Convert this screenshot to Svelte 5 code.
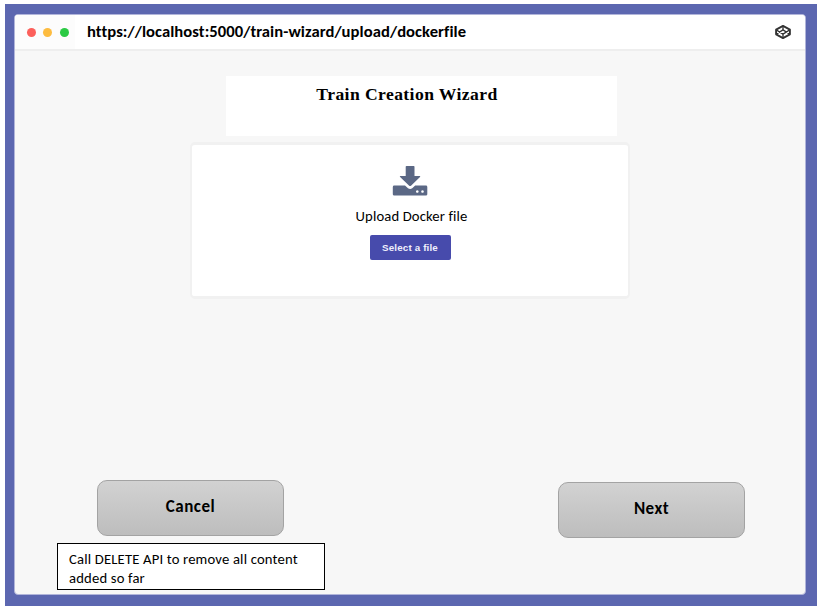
<script>
  const lights = ['#fc605b', '#fdbc40', '#2bca44'];
</script>

<div class="page">
  <div class="frame">
    <div class="window">
      <header>
        <div class="lights">
          {#each lights as color}
            <i style="background: {color}"></i>
          {/each}
        </div>
        <div class="url">https://localhost:5000/train-wizard/upload/dockerfile</div>
        <svg class="logo" viewBox="0 0 18 16" width="18" height="16">
          <g fill="none" stroke="#333" stroke-width="1.9" stroke-linejoin="round">
            <path d="M9 1.9 15.9 5.7V10.3L9 14.1 2.1 10.3V5.7Z" />
            <path d="M2.1 5.7 9 10.1 15.9 5.7M2.1 10.3 9 5.9 15.9 10.3M9 1.9V5.9M9 10.1V14.1" stroke-width="1.35" />
          </g>
        </svg>
      </header>
      <main>
        <h1>Train Creation Wizard</h1>
        <section class="card">
          <svg class="upload" viewBox="0 0 36 32" width="36" height="32">
            <path fill="#5b6885" d="M14.5 1h7.2q.8 0 .8.8V11h5.1q1.3 0 .4 1L19 20.7q-.9.8-1.8 0L8.1 12q-.9-1 .4-1h5.2V1.8q0-.8.8-.8Z" />
            <path fill="#5b6885" fill-rule="evenodd" d="M2.2 20.5H13l3 2.7q2.1 1.6 4.2 0l3-2.7h10.7q1.4 0 1.4 1.4v7.3q0 1.4-1.4 1.4H2.2q-1.4 0-1.4-1.4v-7.3q0-1.4 1.4-1.4ZM25.3 25.2a1.3 1.3 0 1 0 .01 0ZM30.5 25.2a1.3 1.3 0 1 0 .01 0Z" />
          </svg>
          <p>Upload Docker file</p>
          <button class="select">Select a file</button>
        </section>
        <div class="actions">
          <div class="left">
            <button class="big cancel">Cancel</button>
            <div class="note">
              <div>Call DELETE API to remove all content</div>
              <div>added so far</div>
            </div>
          </div>
          <button class="big next">Next</button>
        </div>
      </main>
    </div>
  </div>
</div>

<style>
  :global(body) { margin: 0; background: #fff; }
  * { box-sizing: border-box; }
  .page {
    width: 823px; height: 613px; padding: 4px 6px 7px 5px; background: #fff;
    font-family: Carlito, Lato, sans-serif; color: #000; overflow: hidden;
  }
  .frame { height: 602px; padding: 10px 11px 11px 9px; background: #5c67b0; }
  .window {
    height: 581px; background: #f7f7f7; border: 1px solid #b1b5da; border-radius: 4px;
    display: flex; flex-direction: column; overflow: hidden;
  }
  header {
    height: 36px; flex: none; display: flex; align-items: center; background: #fff;
    border-bottom: 2px solid #eeeeee;
  }
  .lights {
    width: 60px; height: 34px; padding-left: 12px; display: flex; gap: 7.4px;
    align-items: center; background: #fcfcfc;
  }
  i { width: 9px; height: 9px; border-radius: 50%; }
  .url { margin: -2px 0 0 12px; font-size: 16.6px; font-weight: 700; line-height: 20px; white-space: nowrap; letter-spacing: .07px; }
  .logo { margin-left: auto; margin-right: 13px; }
  main { flex: 1; display: flex; flex-direction: column; align-items: center; }
  h1 {
    width: 391px; height: 60px; margin: 25px 0 0 22px; padding: 8px 28px 0 0; background: #fff;
    font: 700 17.6px/20px "Liberation Serif", serif; text-align: center; letter-spacing: .41px; white-space: nowrap;
  }
  .card {
    width: 440px; height: 157px; margin: 6px 0 0; padding: 21px 0 0; background: #fff;
    border: 2px solid #f1f1f1; border-bottom-width: 3px; border-top-width: 3px; border-radius: 5px;
    display: flex; flex-direction: column; align-items: center;
  }
  .upload { flex: none; margin-top: -1px; }
  p { margin: 9px 0 0 3px; font-size: 14.67px; line-height: 20px; white-space: nowrap; letter-spacing: .13px; }
  .select {
    width: 81px; height: 25px; margin: 9px 0 0; padding: 0; border: 0; border-radius: 2px;
    background: #474bac; color: #f0f0fc; font: 700 9.8px/24px "Liberation Sans", sans-serif; letter-spacing: .15px; white-space: nowrap;
  }
  .actions { align-self: stretch; margin: 181px 60px 0 42px; display: flex; justify-content: space-between; }
  .big {
    display: block; width: 187px; height: 56px; padding: 0 0 3px; border: 1px solid #a3a3a3; border-radius: 10px;
    background: linear-gradient(#d2d2d2, #bdbdbd); color: #000; font: 700 17px/20px Carlito, Lato, sans-serif;
    letter-spacing: .5px;
  }
  .cancel { margin-left: 40px; }
  .next { margin-top: 2px; }
  .note {
    width: 268px; height: 47px; margin-top: 7px; padding: 6px 11px 0; border: 1px solid #000; background: #fff;
    font-size: 14.67px; line-height: 19px; white-space: nowrap; letter-spacing: .17px;
  }
</style>
